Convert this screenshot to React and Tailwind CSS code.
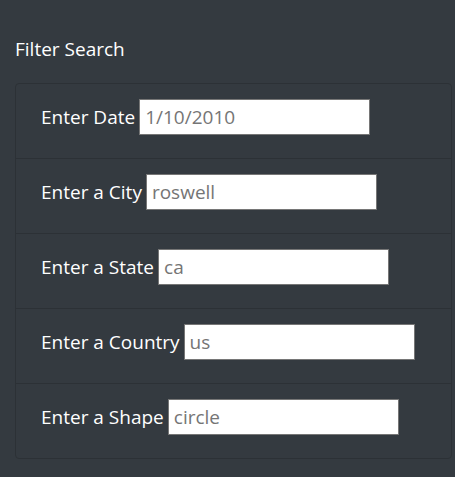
import React from 'react';

const fields = [
  { id: 'datetime', label: 'Enter Date', placeholder: '1/10/2010' },
  { id: 'city', label: 'Enter a City', placeholder: 'roswell' },
  { id: 'state', label: 'Enter a State', placeholder: 'ca' },
  { id: 'country', label: 'Enter a Country', placeholder: 'us' },
  { id: 'shape', label: 'Enter a Shape', placeholder: 'circle' },
];

export default function App() {
  return (
    <div className="min-h-[477px] w-[455px] bg-[#343a40] px-[15px] pt-[36px] font-['Open_Sans',sans-serif] text-white">
      <h5 className="mb-[20px] text-[19px] leading-[27px]">Filter Search</h5>
      <ul className="w-[437px] rounded-[4px] border border-[#2c3136]">
        {fields.map((f, i) => (
          <li
            key={f.id}
            className={`flex items-center pl-[25px] pt-[15px] pb-[23px] ${i > 0 ? 'border-t border-[#2c3136]' : ''}`}
          >
            <label htmlFor={f.id} className="mr-[4px] text-[19px] leading-[36px]">
              {f.label}
            </label>
            <input
              id={f.id}
              type="text"
              placeholder={f.placeholder}
              className="h-[36px] w-[231px] border border-[#767676] bg-white px-[5px] text-[19px] text-black placeholder:text-[#757575]"
            />
          </li>
        ))}
      </ul>
    </div>
  );
}
